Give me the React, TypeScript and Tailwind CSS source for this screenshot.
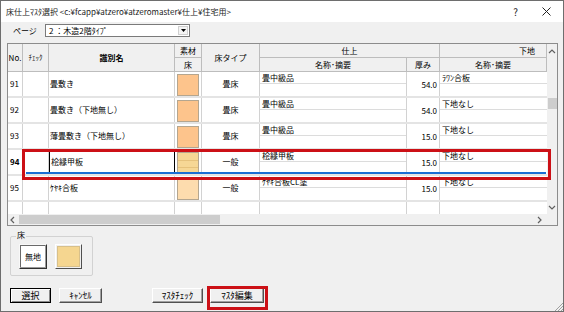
import React from "react";

const COLS = "grid grid-cols-[15px_26px_126px_27px_58px_147px_33px_107px]";
const VL = "border-r border-[#d2d2d2]";
const HD = "flex items-center justify-center border-r border-b border-[#bdbdbd] bg-[#f0f0f0]";

type Row = {
  no: string;
  name: string;
  swatch: string;
  type: string;
  fin: string;
  th: string;
  base: string;
  sel?: boolean;
};

const rows: Row[] = [
  { no: "91", name: "畳敷き", swatch: "bg-[#fdc48c]", type: "畳床", fin: "畳中級品", th: "54.0", base: "ﾗﾜﾝ合板" },
  { no: "92", name: "畳敷き（下地無し）", swatch: "bg-[#fdc48c]", type: "畳床", fin: "畳中級品", th: "54.0", base: "下地なし" },
  { no: "93", name: "薄畳敷き（下地無し）", swatch: "bg-[#fdc48c]", type: "畳床", fin: "畳中級品", th: "15.0", base: "下地なし" },
  { no: "94", name: "桧縁甲板", swatch: "bg-[#f6d795]", type: "一般", fin: "桧縁甲板", th: "15.0", base: "下地なし", sel: true },
  { no: "95", name: "ｹﾔｷ合板", swatch: "bg-[#fddcae]", type: "一般", fin: "ｹﾔｷ合板CL塗", th: "15.0", base: "下地なし" },
];

function Chevron({ dir }: { dir: "up" | "down" | "left" | "right" }) {
  const pts = {
    up: "1,5 4,2 7,5",
    down: "1,2 4,5 7,2",
    left: "5,1 2,4 5,7",
    right: "2,1 5,4 2,7",
  }[dir];
  return (
    <svg width="8" height="8" viewBox="0 0 8 8">
      <polyline points={pts} fill="none" stroke="#606060" strokeWidth="1.2" />
    </svg>
  );
}

function DataRow({ r }: { r: Row }) {
  return (
    <div className={`${COLS} relative h-[26px] border-b-2 border-[#e4e4e4] bg-white`}>
      <div className={`flex items-center pl-[2px] ${VL} ${r.sel ? "font-bold" : ""}`}>{r.no}</div>
      <div className={VL} />
      <div className={`flex items-center pl-[1px] ${r.sel ? "border-x border-black" : VL}`}>{r.name}</div>
      <div className={`px-[2px] pt-[2px] ${VL}`}>
        <div className={`flex h-full flex-col border border-[#b4a690] ${r.swatch}`}>
          {r.sel && (
            <>
              <div className="h-[8px] border-b border-[#e6c27c]" />
              <div className="h-[7px] border-b border-[#e6c27c]" />
            </>
          )}
        </div>
      </div>
      <div className={`flex items-center justify-center ${VL}`}>{r.type}</div>
      <div className={`flex flex-col ${VL}`}>
        <div className="h-[12px] border-b border-[#dcdcdc] pl-[2px] leading-[11px]">{r.fin}</div>
      </div>
      <div className={`flex items-center justify-end pr-[2px] pt-[1px] ${VL}`}>{r.th}</div>
      <div className="flex flex-col">
        <div className="h-[12px] border-b border-[#dcdcdc] pl-[2px] leading-[11px]">{r.base}</div>
      </div>
      {r.sel && <div className="absolute bottom-0 left-[18px] right-[1px] h-[2px] bg-[#1a6fd4]" />}
    </div>
  );
}

function Btn({ label, w, def }: { label: string; w: string; def?: boolean }) {
  return (
    <div
      className={`flex h-[15px] ${w} items-center justify-center text-[9px] ${
        def
          ? "border border-black shadow-[inset_1px_1px_0_#fff,inset_-1px_-1px_0_#8a8a8a]"
          : "border border-t-white border-l-white border-r-[#505050] border-b-[#505050] shadow-[inset_-1px_-1px_0_#a0a0a0]"
      } bg-[#f0f0f0]`}
    >
      {label}
    </div>
  );
}

export default function App() {
  return (
    <div className="relative flex h-[312px] w-[564px] flex-col overflow-hidden border border-[#6e6e6e] bg-[#f0f0f0] font-['Noto_Sans_CJK_JP',sans-serif] text-[8px] leading-none text-black">
      {/* title bar */}
      <div className="flex h-[21px] shrink-0 items-center bg-white pl-[5px] pr-[12px] text-[8px] text-[#222]">
        <span>床仕上ﾏｽﾀ選択 &lt;c:¥fcapp¥atzero¥atzeromaster¥仕上¥住宅用&gt;</span>
        <span className="ml-auto text-[10px]">?</span>
        <svg className="ml-[24px]" width="9" height="9" viewBox="0 0 9 9">
          <path d="M0.5 0.5 L8.5 8.5 M8.5 0.5 L0.5 8.5" stroke="#222" strokeWidth="1" />
        </svg>
      </div>

      {/* page row */}
      <div className="flex h-[21px] shrink-0 items-start pl-[12px] pt-[2px]">
        <span className="mt-[3px] w-[32px]">ページ</span>
        <div className="flex h-[13px] w-[145px] items-center border border-[#7a7a7a] bg-white pl-[3px]">
          <span>2 ：木造2階ﾀｲﾌﾟ</span>
          <div className="ml-auto mr-[1px] flex h-[9px] w-[10px] items-center justify-center border border-[#d0d0d0] bg-[#f4f4f4]">
            <svg width="5" height="3" viewBox="0 0 5 3">
              <path d="M0 0 H5 L2.5 3 Z" fill="#000" />
            </svg>
          </div>
        </div>
      </div>

      {/* grid */}
      <div className="mx-[6px] flex h-[183px] w-[551px] shrink-0 flex-col border border-[#8c8c8c] bg-white">
        <div className="flex h-[170px]">
          <div className="w-[539px]">
            {/* header */}
            <div className={`${COLS} grid-rows-[14px_14px]`}>
              <div className={`${HD} row-span-2`}>No.</div>
              <div className={`${HD} row-span-2 text-[7px]`}>ﾁｪｯｸ</div>
              <div className={`${HD} row-span-2 font-bold`}>識別名</div>
              <div className={HD}>素材</div>
              <div className={`${HD} row-span-2`}>床タイプ</div>
              <div className={`${HD} col-span-2`}>仕上</div>
              <div className={`${HD} justify-end pr-[11px]`}>下地</div>
              <div className={HD}>床</div>
              <div className={HD}>名称･摘要</div>
              <div className={HD}>厚み</div>
              <div className={HD}>名称･摘要</div>
            </div>
            {rows.map((r) => (
              <DataRow key={r.no} r={r} />
            ))}
            <div className={`${COLS} h-[12px]`}>
              <div className={VL} />
              <div className={VL} />
              <div className={VL} />
              <div className={VL} />
              <div className={VL} />
              <div className={VL} />
              <div className={VL} />
              <div />
            </div>
          </div>
          {/* vertical scrollbar */}
          <div className="flex w-[10px] flex-col items-center bg-[#f0f0f0]">
            <div className="mt-[4px]">
              <Chevron dir="up" />
            </div>
            <div className="mt-[42px] h-[11px] w-[9px] bg-[#cdcdcd]" />
            <div className="mt-auto mb-[2px]">
              <Chevron dir="down" />
            </div>
          </div>
        </div>
        {/* horizontal scrollbar */}
        <div className="flex h-[11px] bg-[#f0f0f0]">
          <div className="flex w-[539px] items-center">
            <div className="ml-[1px]">
              <Chevron dir="left" />
            </div>
            <div className="ml-[2px] h-[9px] w-[201px] bg-[#cdcdcd]" />
            <div className="ml-auto mr-[3px]">
              <Chevron dir="right" />
            </div>
          </div>
          <div className="w-[10px]" />
        </div>
      </div>

      {/* group box */}
      <div className="relative ml-[9px] mt-[10px] flex h-[40px] w-[83px] gap-[8px] rounded-[2px] border border-[#d2d2d2] pl-[8px] pt-[7px]">
        <span className="absolute -top-[6px] left-[5px] bg-[#f0f0f0] px-[1px]">床</span>
        <div className="flex h-[25px] w-[28px] items-center justify-center border border-t-[#f8f8f8] border-l-[#f8f8f8] border-r-[#303030] border-b-[#303030] bg-white shadow-[inset_-1px_-1px_0_#9a9a9a,inset_1px_1px_0_#6a6a6a]">
          無地
        </div>
        <div className="flex h-[25px] w-[27px] items-center justify-center border border-t-white border-l-white border-r-[#505050] border-b-[#505050] bg-[#f0f0f0]">
          <div className="h-[21px] w-[23px] border border-[#d8c08a] bg-[#f5d690]" />
        </div>
      </div>

      {/* buttons */}
      <div className="ml-[9px] mt-[12px] flex items-center">
        <Btn label="選択" w="w-[41px]" def />
        <div className="ml-[8px]">
          <Btn label="ｷｬﾝｾﾙ" w="w-[43px]" />
        </div>
        <div className="ml-[50px]">
          <Btn label="ﾏｽﾀﾁｪｯｸ" w="w-[51px]" />
        </div>
        <div className="ml-[7px]">
          <Btn label="ﾏｽﾀ編集" w="w-[54px]" />
        </div>
      </div>

      {/* annotation boxes */}
      <div className="absolute left-[21px] top-[148px] h-[31px] w-[529px] border-[3px] border-[#cc1016]" />
      <div className="absolute left-[206px] top-[285px] h-[24px] w-[61px] border-[3px] border-[#cc1016]" />

      {/* resize grip */}
      <svg className="absolute bottom-0 right-0" width="9" height="9" viewBox="0 0 9 9">
        <path d="M9 1 L1 9 M9 4 L4 9 M9 7 L7 9" stroke="#a0a0a0" strokeWidth="1" />
      </svg>
    </div>
  );
}
